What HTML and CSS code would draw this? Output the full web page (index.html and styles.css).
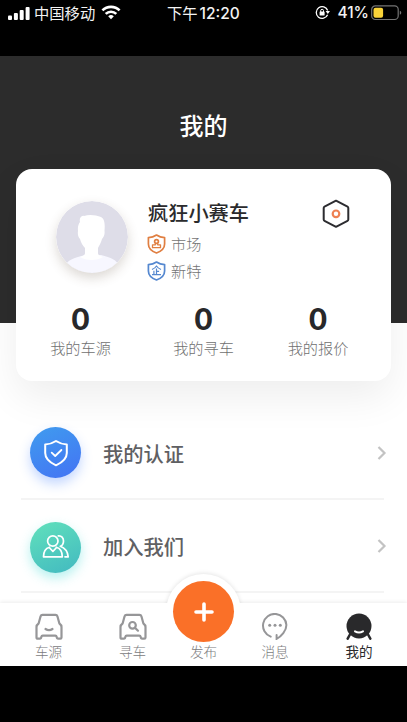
FILE: index.html
```html
<!DOCTYPE html>
<html lang="zh-CN">
<head>
<meta charset="utf-8">
<meta name="viewport" content="width=device-width, initial-scale=1">
<title>我的</title>
<link rel="stylesheet" href="styles.css">
</head>
<body>
<div class="phone">
  <header class="status">
    <div class="status-left">
      <svg class="signal" width="22" height="14" viewBox="0 0 22 14" fill="#fff"><rect x="0" y="9.500" width="4" height="4.500" rx="1"/><rect x="5.900" y="7" width="4" height="7" rx="1"/><rect x="11.700" y="4" width="4" height="10" rx="1"/><rect x="17.600" y="1" width="4" height="13" rx="1"/></svg>
      <span class="carrier">中国移动</span>
      <svg class="wifi" width="20" height="15" viewBox="0 0 20 15" fill="none" stroke="#fff" stroke-width="2.600"><path d="M1.400 5.400a12.200 12.200 0 0 1 17.200 0"/><path d="M4.700 8.900a7.500 7.500 0 0 1 10.600 0"/><path d="M7.200 11.300a4 4 0 0 1 5.600 0L10 14.300z" fill="#fff" stroke="none"/></svg>
    </div>
    <div class="status-time">下午<span>12:20</span></div>
    <div class="status-right">
      <svg class="lock" width="15" height="15" viewBox="0 0 15 15" fill="none" stroke="#fff" stroke-width="1.300"><path d="M12.600 9.800a5.900 5.900 0 1 1 .1-4.300"/><path d="M10.600 6h4.400l-2.200 2.900z" fill="#fff" stroke="none"/><rect x="4.600" y="6.500" width="5" height="4" rx=".6" fill="#fff" stroke="none"/><path d="M5.700 7V5.700a1.400 1.400 0 0 1 2.800 0V7" stroke-width="1"/></svg>
      <span class="percent">41%</span>
      <svg class="battery" width="31" height="16" viewBox="0 0 31 16"><rect x=".7" y=".9" width="26.500" height="13.600" rx="3.600" fill="none" stroke="#747474" stroke-width="1.200"/><rect x="2.500" y="2.700" width="9.600" height="10" rx="2" fill="#fad339"/><path d="M28.800 5.700c2 .7 2 3.300 0 4z" fill="#747474"/></svg>
    </div>
  </header>

  <main class="screen">
    <section class="hero">
      <h1 class="title">我的</h1>
      <div class="card">
        <div class="profile">
          <svg class="avatar" width="72" height="72" viewBox="0 0 72 72"><defs><clipPath id="round"><circle cx="36" cy="36" r="36"/></clipPath></defs><g clip-path="url(#round)"><rect width="72" height="72" fill="#dedde8"/><path d="M9 66c2-8 10-9 20-12h16c10 3 16 4 18 12v8H9z" fill="#f7f7ff"/><path d="M24 21c-1-3 1-7 4-6 5-2 12-1 17 1 4 2 4 8 3.500 14 .5 3-.5 6-2.500 8-1 4-3 7-4 9v5c0 2 2 3 5 4-6 4-17 4-23 0 3-1 5-2 5-4v-5c-2-2-4-5-5-9-2-2-2.500-5-2-8-.5-4 .5-7 2-9z" fill="#fff"/></g></svg>
          <div class="identity">
            <h2 class="name">疯狂小赛车</h2>
            <p class="badge"><svg width="19" height="20" viewBox="0 0 19 20" fill="none" stroke="#e07f42" stroke-width="1.700" stroke-linejoin="round"><path d="M9.500 1Q13 3.400 17.600 3.600V10q0 6-8.100 9Q1.400 16 1.400 10V3.600Q6 3.400 9.500 1z"/><circle cx="9.500" cy="7.500" r="1.900"/><path d="M8.500 9.500l-.3 1.300H5.500v2.900h8v-2.900h-2.700l-.3-1.300" stroke-width="1.300"/></svg>市场</p>
            <p class="badge"><svg width="19" height="20" viewBox="0 0 19 20" fill="none" stroke="#5588d0" stroke-width="1.700" stroke-linejoin="round"><path d="M9.500 1Q13 3.400 17.600 3.600V10q0 6-8.100 9Q1.400 16 1.400 10V3.600Q6 3.400 9.500 1z"/><path d="M5 8.500q3-1.200 4.500-3.500Q11 7.300 14 8.500M9.500 7.500v6M9.500 10.300h2.600M6.900 9.800v3.700M5 13.700h9" stroke-width="1.200"/></svg>新特</p>
          </div>
          <svg class="settings" width="28" height="30" viewBox="0 0 28 30" fill="none" stroke="#2c2c30" stroke-width="2" stroke-linejoin="round"><path d="M14 1.700 25.500 7.700q.8.400.8 1.300v11.500q0 .9-.8 1.300L14 27.800 2.500 21.800q-.8-.4-.8-1.300V9q0-.9.8-1.300z"/><circle cx="14" cy="14.800" r="3.300" stroke="#ee8052" stroke-width="2.200"/></svg>
        </div>
        <div class="stats">
          <div class="stat"><b>0</b><span>我的车源</span></div>
          <div class="stat"><b>0</b><span>我的寻车</span></div>
          <div class="stat"><b>0</b><span>我的报价</span></div>
        </div>
      </div>
    </section>

    <nav class="menu">
      <a class="row">
        <span class="disc disc-blue"><svg width="26" height="28" viewBox="0 0 26 28" fill="none" stroke="#fff" stroke-width="2" stroke-linejoin="round" stroke-linecap="round"><path d="M13 2Q18 5.300 23.800 5.500V14c0 6-4.500 9.500-10.800 12.300C6.700 23.500 2.200 20 2.200 14V5.500Q8 5.300 13 2z"/><path d="m8.700 13.700 3.500 3.300 6.200-6" stroke-width="1.800"/></svg></span>
        <span class="label">我的认证</span>
        <svg class="chevron" width="10" height="14" viewBox="0 0 10 14" fill="none" stroke="#c3c3c3" stroke-width="2.200"><path d="m1.500 1 6 6-6 6"/></svg>
      </a>
      <a class="row">
        <span class="disc disc-green"><svg width="28" height="26" viewBox="0 0 28 26" fill="none" stroke="#fff" stroke-width="1.700" stroke-linejoin="round" stroke-linecap="round"><circle cx="10.800" cy="7" r="5.200"/><path d="M16.300 1.900c3.200-.4 5.200 2 5.200 5 0 2.600-1.300 4.600-3.200 5.400 4.500 1.600 7.300 4.700 7.900 10.500H23M7.500 13.200c-3.900 1-6 4-6 9.600h18.800c0-5.600-2.100-8.600-6-9.600M7.700 14l3.200 3.300 3.200-3.300"/></svg></span>
        <span class="label">加入我们</span>
        <svg class="chevron" width="10" height="14" viewBox="0 0 10 14" fill="none" stroke="#c3c3c3" stroke-width="2.200"><path d="m1.500 1 6 6-6 6"/></svg>
      </a>
    </nav>

    <nav class="tabs">
      <a class="tab"><svg width="28" height="27" viewBox="0 0 28 27" fill="none" stroke="#969698" stroke-width="2.200" stroke-linejoin="round" stroke-linecap="round"><path d="M7.500 1.800h13q1.500 0 1.900 1.400l2 7.300q2.100 1.500 2.100 3.500v10.500q0 1.200-1.200 1.200h-2.200q-1.300 0-1.500-2-.2-1-1.300-1H7.700q-1.100 0-1.300 1-.2 2-1.500 2H2.700q-1.200 0-1.200-1.200V14q0-2 2.100-3.500l2-7.300Q6 1.800 7.500 1.800z"/><path d="M10.500 16q3.500 2.400 7 0"/></svg><span>车源</span></a>
      <a class="tab"><svg width="28" height="27" viewBox="0 0 28 27" fill="none" stroke="#969698" stroke-width="2.200" stroke-linejoin="round" stroke-linecap="round"><path d="M7.500 1.800h13q1.500 0 1.900 1.400l2 7.300q2.100 1.500 2.100 3.500v10.500q0 1.200-1.200 1.200h-2.200q-1.300 0-1.500-2-.2-1-1.300-1H7.700q-1.100 0-1.300 1-.2 2-1.500 2H2.700q-1.200 0-1.200-1.200V14q0-2 2.100-3.500l2-7.300Q6 1.800 7.500 1.800z"/><circle cx="13.500" cy="12.300" r="3.300"/><path d="m16 14.700 3 3"/></svg><span>寻车</span></a>
      <a class="tab tab-add"><span class="bump"></span><span class="cover"></span><i class="add"><svg width="20" height="20" viewBox="0 0 20 20" stroke="#fff" stroke-width="3.600" stroke-linecap="round"><path d="M10 2v16M2 10h16"/></svg></i><span class="caption">发布</span></a>
      <a class="tab"><svg width="28" height="27" viewBox="0 0 28 27" fill="none" stroke="#969698" stroke-width="2" stroke-linecap="round"><path d="M9.700 23.600A11.700 11.700 0 1 1 25.400 12c0 5.800-5 11.200-9.800 14v-4"/><g fill="#969698" stroke="none"><circle cx="8.700" cy="12.300" r="1.500"/><circle cx="14" cy="12.300" r="1.500"/><circle cx="19.300" cy="12.300" r="1.500"/></g></svg><span>消息</span></a>
      <a class="tab tab-active"><svg width="28" height="27" viewBox="0 0 28 27"><circle cx="14" cy="13" r="12.500" fill="#29292b"/><path d="M5.500 20.500 2.700 25.700M22.500 20.500l2.800 5.200" stroke="#29292b" stroke-width="2.500" stroke-linecap="round"/><path d="M10 18.300q4 2.300 8 0" fill="none" stroke="#fff" stroke-width="2" stroke-linecap="round"/></svg><span>我的</span></a>
    </nav>
  </main>
</div>
</body>
</html>
```
FILE: styles.css
```css
* { box-sizing: border-box; }
body { margin: 0; background: #000; font-family: "Noto Sans CJK SC", sans-serif; }
h1, h2, p { margin: 0; }
svg { display: block; flex: none; }

.phone { width: 407px; height: 722px; overflow: hidden; background: #000; }

.status { height: 56px; padding: 0 5px 0 8px; display: grid; grid-template-columns: 159px 1fr auto; align-items: start; color: #f3f3f3; font-size: 15.3px; line-height: 25px; }
.status-left, .status-right { display: flex; align-items: center; height: 25px; }
.signal { margin-right: 4px; }
.wifi { margin-left: 6px; }
.status-time { white-space: nowrap; }
.status-time span { margin-left: 2px; font: 500 15.5px/25px Inter, sans-serif; }
.percent { margin: 0 2px 0 7px; font: 500 15.5px/25px Inter, sans-serif; }

.screen { height: 610px; display: flex; flex-direction: column; background: #fff; overflow: hidden; }
.hero { height: 267px; flex: none; background: #2c2c2c; padding: 0 16px; }
.title { height: 113px; padding-top: 49px; color: #fff; font-size: 24px; line-height: 40px; font-weight: 500; text-align: center; }
.card { height: 212px; border-radius: 16px; background: #fff; box-shadow: 0 16px 40px rgba(0, 0, 0, .07); }
.profile { height: 131px; padding: 30px 41px 0 40px; display: flex; align-items: flex-start; }
.avatar { margin-top: 2px; border-radius: 50%; box-shadow: 0 5px 12px rgba(80, 60, 40, .2); }
.identity { flex: 1; margin: -1px 0 0 20px; }
.name { color: #2b2b2d; font-size: 20.2px; line-height: 30px; font-weight: 500; }
.badge { display: flex; align-items: center; gap: 5px; margin-left: -1px; height: 27px; color: #747474; font-size: 15.2px; line-height: 27px; font-weight: 300; }
.name + .badge { margin-top: 2px; }
.stats { display: grid; grid-template-columns: 129px 117px 112px; }
.stat { display: flex; flex-direction: column; align-items: center; }
.stat b { color: #28282a; font: 900 31px/36px Lato, sans-serif; }
.stat span { color: #707070; font-size: 15.2px; line-height: 22px; font-weight: 300; }

.menu { flex: none; padding: 84px 23px 0 21px; }
.row { height: 93px; padding-left: 9px; display: flex; align-items: center; border-bottom: 2px solid #f4f4f4; }
.disc { width: 51px; height: 51px; border-radius: 50%; display: grid; place-items: center; }
.disc-blue { background: linear-gradient(155deg, #4098ef 10%, #4379f3 85%); box-shadow: 0 6px 12px rgba(70, 130, 255, .32); }
.disc-green { margin-top: 3px; background: linear-gradient(155deg, #5eddbc 10%, #45bdc0 90%); box-shadow: 0 5px 12px rgba(70, 220, 215, .4); }
.label { flex: 1; margin-left: 22px; color: #5f6063; font-size: 20.3px; font-weight: 500; line-height: 30px; }
.chevron { margin-right: -3px; }

.tabs { position: relative; margin-top: auto; height: 63px; flex: none; padding: 0 6px; display: grid; grid-template-columns: 85px 83px 59px 84px 84px; background: #fff; box-shadow: 0 -1px 4px rgba(0, 0, 0, .08); }
.tab { position: relative; display: flex; flex-direction: column; align-items: center; padding-top: 10px; color: #7b7b7d; font-size: 13.6px; line-height: 20px; font-weight: 300; }
.tab > span:last-child { margin-top: 1px; }
.tab-active { color: #29292b; font-weight: 400; }
.tab-add { padding-top: 37px; }
.bump { position: absolute; top: -29px; left: -8px; width: 75px; height: 75px; border-radius: 50%; background: #fff; box-shadow: 0 -1px 4px rgba(0, 0, 0, .1); }
.cover { position: absolute; top: 0; left: -14px; width: 87px; height: 63px; background: #fff; }
.add { position: absolute; top: -22px; left: -1px; width: 61px; height: 61px; border-radius: 50%; background: #fa7028; display: grid; place-items: center; }
.caption { position: relative; }
```
